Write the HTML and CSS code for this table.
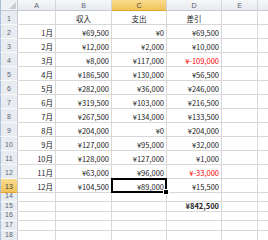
FILE: index.html
```html
<!DOCTYPE html>
<html lang="ja">
<head>
<meta charset="utf-8">
<link rel="stylesheet" href="styles.css">
</head>
<body>
<div class="sheet">
  <div class="corner"><svg class="tri" width="7" height="7" viewBox="0 0 7 7"><polygon points="7,0 7,7 0,7" fill="#c9cdd2"/></svg></div>
  <div class="ch">A</div><div class="ch">B</div><div class="ch sel">C</div><div class="ch">D</div><div class="ch">E</div><div class="ch last"></div>

  <div class="rh">1</div><div class="c"></div><div class="c ctr">収入</div><div class="c ctr">支出</div><div class="c ctr">差引</div><div class="c"></div><div class="c last"></div>
  <div class="rh">2</div><div class="c">1月</div><div class="c">¥69,500</div><div class="c">¥0</div><div class="c">¥69,500</div><div class="c"></div><div class="c last"></div>
  <div class="rh">3</div><div class="c">2月</div><div class="c">¥12,000</div><div class="c">¥2,000</div><div class="c">¥10,000</div><div class="c"></div><div class="c last"></div>
  <div class="rh">4</div><div class="c">3月</div><div class="c">¥8,000</div><div class="c">¥117,000</div><div class="c neg">¥-109,000</div><div class="c"></div><div class="c last"></div>
  <div class="rh">5</div><div class="c">4月</div><div class="c">¥186,500</div><div class="c">¥130,000</div><div class="c">¥56,500</div><div class="c"></div><div class="c last"></div>
  <div class="rh">6</div><div class="c">5月</div><div class="c">¥282,000</div><div class="c">¥36,000</div><div class="c">¥246,000</div><div class="c"></div><div class="c last"></div>
  <div class="rh">7</div><div class="c">6月</div><div class="c">¥319,500</div><div class="c">¥103,000</div><div class="c">¥216,500</div><div class="c"></div><div class="c last"></div>
  <div class="rh">8</div><div class="c">7月</div><div class="c">¥267,500</div><div class="c">¥134,000</div><div class="c">¥133,500</div><div class="c"></div><div class="c last"></div>
  <div class="rh">9</div><div class="c">8月</div><div class="c">¥204,000</div><div class="c">¥0</div><div class="c">¥204,000</div><div class="c"></div><div class="c last"></div>
  <div class="rh">10</div><div class="c">9月</div><div class="c">¥127,000</div><div class="c">¥95,000</div><div class="c">¥32,000</div><div class="c"></div><div class="c last"></div>
  <div class="rh">11</div><div class="c">10月</div><div class="c">¥128,000</div><div class="c">¥127,000</div><div class="c">¥1,000</div><div class="c"></div><div class="c last"></div>
  <div class="rh">12</div><div class="c">11月</div><div class="c">¥63,000</div><div class="c">¥96,000</div><div class="c neg">¥-33,000</div><div class="c"></div><div class="c last"></div>
  <div class="rh sel">13</div><div class="c">12月</div><div class="c">¥104,500</div><div class="c active">¥89,000</div><div class="c">¥15,500</div><div class="c"></div><div class="c last"></div>
  <div class="rh">14</div><div class="c"></div><div class="c"></div><div class="c"></div><div class="c"></div><div class="c"></div><div class="c last"></div>
  <div class="rh">15</div><div class="c"></div><div class="c"></div><div class="c"></div><div class="c total">¥842,500</div><div class="c"></div><div class="c last"></div>
  <div class="rh">16</div><div class="c"></div><div class="c"></div><div class="c"></div><div class="c"></div><div class="c"></div><div class="c last"></div>
  <div class="rh">17</div><div class="c"></div><div class="c"></div><div class="c"></div><div class="c"></div><div class="c"></div><div class="c last"></div>
  <div class="rh">18</div><div class="c"></div><div class="c"></div><div class="c"></div><div class="c"></div><div class="c"></div><div class="c last"></div>
</div>
</body>
</html>
```

FILE: styles.css
```css
* { box-sizing: border-box; }
html, body { margin: 0; padding: 0; background: #fff; overflow: hidden; }
body { width: 268px; height: 240px; }

.sheet {
  display: grid;
  grid-template-columns: 18px 38px 56px 55px 55px 36px 10px;
  grid-template-rows: 11px repeat(13, 14px) 9px 10px 9px 10px 10px;
  font-family: "Noto Sans CJK JP", "Liberation Sans", sans-serif;
  font-size: 7.5px;
  color: #222;
}

.corner {
  background: #eef0f3;
  border-right: 1px solid #c6cbd2;
  border-bottom: 1px solid #c6cbd2;
  border-left: 1px solid #a9c0dc;
  display: flex;
  align-items: flex-end;
  justify-content: flex-end;
  padding: 0 1px 1px 0;
}
.tri { display: block; }

.ch {
  background: linear-gradient(#f6f7f9, #e6e9ee);
  border-right: 1px solid #d2d6dc;
  border-bottom: 1px solid #c6cbd2;
  color: #5b6470;
  font-family: "Liberation Sans", sans-serif;
  font-size: 7px;
  display: flex;
  align-items: center;
  justify-content: center;
  line-height: 1;
}
.ch.sel {
  background: linear-gradient(#f9dc8e, #f1c35a);
  border-bottom-color: #e0a630;
  color: #444;
}
.ch.last { border-right: none; }

.rh {
  background: #e8ebf0;
  border-right: 1px solid #c6cbd2;
  border-bottom: 1px solid #f7f8fa;
  border-left: 1px solid #a9c0dc;
  color: #5b6470;
  font-family: "Liberation Sans", sans-serif;
  font-size: 7px;
  display: flex;
  align-items: flex-end;
  justify-content: center;
  line-height: 1;
  padding-bottom: 2px;
}
.rh.sel {
  background: linear-gradient(#f9dc8e, #f1c35a);
  border-bottom-color: #e0a630;
  color: #444;
}

.c {
  border-right: 1px solid #d8d8d8;
  border-bottom: 1px solid #d8d8d8;
  display: flex;
  align-items: flex-end;
  justify-content: flex-end;
  padding: 0 2px 2px 0;
  line-height: 1;
  white-space: nowrap;
  position: relative;
}
.c.last { border-right: none; }
.c.ctr { justify-content: center; padding-right: 0; }
.c.neg { color: #ff0000; }
.c.total { font-weight: bold; }

.c.active::after {
  content: "";
  position: absolute;
  left: -1px;
  top: -1px;
  right: -1px;
  bottom: -1px;
  border: 2px solid #000;
}
.c.active::before {
  content: "";
  position: absolute;
  right: -3px;
  bottom: -3px;
  width: 4px;
  height: 4px;
  background: #000;
  border: 1px solid #fff;
  z-index: 1;
}
```
